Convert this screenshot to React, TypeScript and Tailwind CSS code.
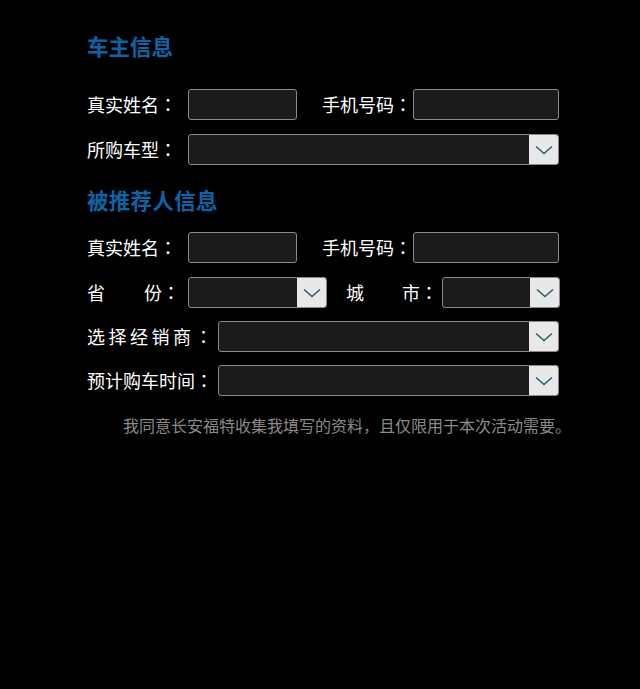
const font = { fontFamily: '"Noto Sans CJK SC", "Noto Sans", sans-serif' };

const Colon = () => (
  <span style={{ fontFamily: '"Noto Sans CJK TC", sans-serif' }}>：</span>
);

const TextBox = ({ className }: { className: string }) => (
  <div
    className={`h-[31px] rounded-[3px] border border-[#8a8a8a] bg-[#1b1b1b] ${className}`}
  />
);

const Chevron = () => (
  <svg width="18" height="10" viewBox="0 0 18 10" fill="none">
    <path d="M1 1.5 L9 8.5 L17 1.5" stroke="#2d5b72" strokeWidth="1.5" />
  </svg>
);

const SelectBox = ({ className }: { className: string }) => (
  <div
    className={`flex h-[31px] overflow-hidden rounded-[3px] border border-[#8a8a8a] bg-[#1b1b1b] ${className}`}
  >
    <div className="flex-1" />
    <div className="flex w-[29px] items-center justify-center bg-[#e8e8e8]">
      <Chevron />
    </div>
  </div>
);

const Label = ({ text, className = '' }: { text: string; className?: string }) => (
  <div className={`flex items-center text-[18px] leading-[31px] text-white ${className}`}>
    {text}
    <Colon />
  </div>
);

const Title = ({ text, className = '' }: { text: string; className?: string }) => (
  <div className={`h-[30px] text-[21.5px] font-bold leading-[30px] text-[#0a64a8] ${className}`}>
    {text}
  </div>
);

const App = () => {
  return (
    <div className="min-h-screen bg-black pl-[87px] pt-[31px]" style={font}>
      <Title text="车主信息" />

      <div className="mt-[28px] flex">
        <Label text="真实姓名" className="w-[101px]" />
        <TextBox className="w-[109px]" />
        <Label text="手机号码" className="ml-[25px] w-[91px]" />
        <TextBox className="w-[146px]" />
      </div>

      <div className="mt-[14px] flex">
        <Label text="所购车型" className="w-[101px]" />
        <SelectBox className="w-[371px]" />
      </div>

      <Title text="被推荐人信息" className="mt-[20px] tracking-[0.3px]" />

      <div className="mt-[17px] flex">
        <Label text="真实姓名" className="w-[101px]" />
        <TextBox className="w-[109px]" />
        <Label text="手机号码" className="ml-[25px] w-[91px]" />
        <TextBox className="w-[146px]" />
      </div>

      <div className="mt-[14px] flex">
        <div className="flex w-[101px] items-center text-[18px] leading-[31px] text-white">
          <span className="w-[57px]">省</span>
          <span>份</span>
          <Colon />
        </div>
        <SelectBox className="w-[139px]" />
        <div className="ml-[19px] flex w-[96px] items-center text-[18px] leading-[31px] text-white">
          <span className="w-[56px]">城</span>
          <span>市</span>
          <Colon />
        </div>
        <SelectBox className="w-[118px]" />
      </div>

      <div className="mt-[13px] flex">
        <Label text="选择经销商" className="w-[131px] tracking-[3.5px]" />
        <SelectBox className="w-[341px]" />
      </div>

      <div className="mt-[13px] flex">
        <Label text="预计购车时间" className="w-[131px]" />
        <SelectBox className="w-[341px]" />
      </div>

      <div className="mt-[17px] pl-[36px] text-[16px] leading-[24px] text-[#8a8a8a]">
        我同意长安福特收集我填写的资料，且仅限用于本次活动需要。
      </div>
    </div>
  );
};

export default App;
